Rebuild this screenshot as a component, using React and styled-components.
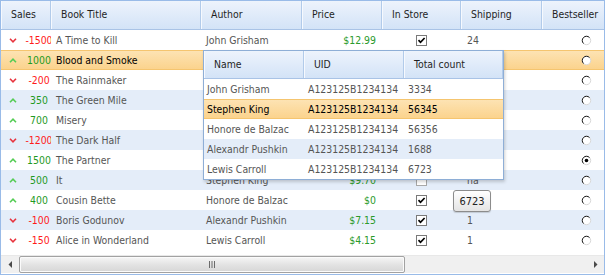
import React from "react";
import styled, { createGlobalStyle, css } from "styled-components";

const GlobalStyle = createGlobalStyle`
  body {
    margin: 0;
    background: #ffffff;
  }
`;

const COLS = "50px 150px 101px 80px 79px 81px 88px";

const Grid = styled.div`
  position: relative;
  width: 605px;
  height: 275px;
  box-sizing: border-box;
  border: 1px solid #99bbe8;
  background: #ffffff;
  overflow: hidden;
  display: flex;
  flex-direction: column;
  font-family: "DejaVu Sans Condensed", "DejaVu Sans", sans-serif;
  font-stretch: condensed;
  font-size: 10.4px;
  color: #555555;
`;

const HeaderRow = styled.div`
  display: grid;
  grid-template-columns: ${(p) => p.$cols};
  height: ${(p) => p.$h || 29}px;
  flex: none;
  box-sizing: border-box;
  border-bottom: 1px solid #a9c3e6;
  background: linear-gradient(#edf3fc, #d3e3f7);
`;

const HeaderCell = styled.div`
  padding-left: 10px;
  line-height: 27px;
  color: #1f1f1f;
  white-space: nowrap;
  overflow: hidden;
  border-right: 1px solid #b2cbea;
  box-shadow: inset 1px 0 0 #f6f9fe;
`;

const Body = styled.div`
  flex: none;
`;

const rowTone = {
  plain: css`
    background: #ffffff;
  `,
  alt: css`
    background: #e4edf9;
  `,
  selected: css`
    background: linear-gradient(#fde3b3, #fbd38d);
    border-top: 1px solid #f5c56f;
    border-bottom: 1px solid #f5c56f;
    color: #000000;
  `,
};

const Row = styled.div`
  display: grid;
  grid-template-columns: ${(p) => p.$cols};
  height: 20px;
  box-sizing: border-box;
  align-items: center;
  ${(p) => rowTone[p.$tone]}
`;

const Cell = styled.div`
  padding: 0 ${(p) => p.$pad || 5}px;
  text-align: ${(p) => p.$align || "left"};
  white-space: nowrap;
  overflow: hidden;
  display: ${(p) => (p.$center ? "flex" : "block")};
  justify-content: center;
  align-items: center;
`;

const SalesCell = styled.div`
  display: flex;
  align-items: center;
  overflow: hidden;
  padding-left: 8px;
  white-space: nowrap;
`;

const Icon = styled.span`
  flex: none;
  display: flex;
  width: 8px;
`;

const SalesValue = styled.span`
  flex: none;
  width: 40px;
  margin-left: 2px;
  text-align: center;
  color: ${(p) => (p.$up ? "#1f9a1f" : "#ff1a1a")};
`;

const Price = styled(Cell)`
  color: #2b9a2b;
  padding-right: 6px;
`;

const Spacer = styled.div`
  flex: 1;
`;

const ScrollBar = styled.div`
  flex: none;
  height: 17px;
  margin-bottom: 1px;
  display: flex;
  background: #f0f0f0;
  border-top: 1px solid #e8e8e8;
`;

const ScrollBtn = styled.div`
  width: 17px;
  display: flex;
  align-items: center;
  justify-content: center;
  flex: none;
`;

const Track = styled.div`
  flex: 1;
  display: flex;
  align-items: stretch;
  padding: 0 1px;
`;

const Thumb = styled.div`
  width: 386px;
  box-sizing: border-box;
  border: 1px solid #a2a2a2;
  border-radius: 2px;
  background: linear-gradient(#f6f6f6, #e2e2e2 55%, #d6d6d6);
  box-shadow: inset 0 0 0 1px #fbfbfb;
  display: flex;
  align-items: center;
  justify-content: center;
`;

const Popup = styled.div`
  position: absolute;
  left: 202px;
  top: 49px;
  width: 301px;
  box-sizing: border-box;
  border: 1px solid #8eaed6;
  background: #ffffff;
  box-shadow: 1px 2px 3px rgba(0, 0, 0, 0.18);
`;

const POP_COLS = "100px 100px 99px";

const Tooltip = styled.div`
  position: absolute;
  left: 452px;
  top: 189px;
  width: 38px;
  height: 22px;
  box-sizing: border-box;
  border: 1px solid #8c8c8c;
  border-radius: 3px;
  background: linear-gradient(#ffffff, #e4e4e4);
  color: #222222;
  font-size: 11px;
  display: flex;
  align-items: center;
  justify-content: center;
  box-shadow: 0 1px 1px rgba(0, 0, 0, 0.15);
`;

const Chevron = ({ up }) => (
  <svg width="8" height="5" viewBox="0 0 8 5">
    {up ? (
      <path d="M1 4.2 L4 1.2 L7 4.2" fill="none" stroke="#55cc55" strokeWidth="1.6" />
    ) : (
      <path d="M1 0.8 L4 3.8 L7 0.8" fill="none" stroke="#e8353f" strokeWidth="1.6" />
    )}
  </svg>
);

const CheckBox = ({ checked }) => (
  <svg width="11" height="11" viewBox="0 0 11 11">
    <rect x="0.5" y="0.5" width="10" height="10" fill="#ffffff" stroke={checked ? "#7a7a7a" : "#a8a8a8"} />
    {checked && (
      <path d="M2.5 5.2 L4.5 7.3 L8.6 3" fill="none" stroke="#000000" strokeWidth="1.7" />
    )}
  </svg>
);

const Radio = ({ checked }) => (
  <svg width="11" height="11" viewBox="0 0 11 11">
    <circle cx="5.5" cy="5.5" r="4.2" fill="#ffffff" stroke="#d8d8d8" />
    <path d="M2.5 8.5 A4.2 4.2 0 0 1 8.5 2.5" fill="none" stroke="#1a1a1a" strokeWidth="1" />
    {checked && <circle cx="5.5" cy="5.5" r="1.8" fill="#000000" />}
  </svg>
);

const Grip = () => (
  <svg width="8" height="7" viewBox="0 0 8 7">
    <path d="M1.5 0 V7 M4 0 V7 M6.5 0 V7" stroke="#6b6b6b" strokeWidth="1" />
  </svg>
);

const Arrow = ({ dir }) => (
  <svg width="4" height="7" viewBox="0 0 4 7">
    {dir === "left" ? <path d="M4 0 L0.5 3.5 L4 7 Z" fill="#4a4a4a" /> : <path d="M0 0 L3.5 3.5 L0 7 Z" fill="#4a4a4a" />}
  </svg>
);

// rows 2-7 sit under the author dropdown, so their author/price/shipping stay blank
const books = [
  { sales: -1500, title: "A Time to Kill", author: "John Grisham", price: "$12.99", inStore: true, ship: "24" },
  { sales: 1000, title: "Blood and Smoke", author: "", price: "", inStore: true, ship: "" },
  { sales: -200, title: "The Rainmaker", author: "", price: "", inStore: false, ship: "" },
  { sales: 350, title: "The Green Mile", author: "", price: "", inStore: true, ship: "" },
  { sales: 700, title: "Misery", author: "", price: "", inStore: true, ship: "" },
  { sales: -1200, title: "The Dark Half", author: "", price: "", inStore: false, ship: "" },
  { sales: 1500, title: "The Partner", author: "", price: "", inStore: true, ship: "", best: true },
  { sales: 500, title: "It", author: "Stephen King", price: "$9.70", inStore: false, ship: "na" },
  { sales: 400, title: "Cousin Bette", author: "Honore de Balzac", price: "$0", inStore: true, ship: "" },
  { sales: -100, title: "Boris Godunov", author: "Alexandr Pushkin", price: "$7.15", inStore: true, ship: "1" },
  { sales: -150, title: "Alice in Wonderland", author: "Lewis Carroll", price: "$4.15", inStore: true, ship: "1" },
];

const authors = [
  { name: "John Grisham", uid: "A123125B1234134", total: "3334" },
  { name: "Stephen King", uid: "A123125B1234134", total: "56345", selected: true },
  { name: "Honore de Balzac", uid: "A123125B1234134", total: "56356" },
  { name: "Alexandr Pushkin", uid: "A123125B1234134", total: "1688" },
  { name: "Lewis Carroll", uid: "A123125B1234134", total: "6723" },
];

const toneFor = (i, selected) => (selected ? "selected" : i % 2 ? "alt" : "plain");

export default function App() {
  return (
    <>
      <GlobalStyle />
      <Grid>
        <HeaderRow $cols={COLS}>
          {["Sales", "Book Title", "Author", "Price", "In Store", "Shipping", "Bestseller"].map((h) => (
            <HeaderCell key={h}>{h}</HeaderCell>
          ))}
        </HeaderRow>
        <Body>
          {books.map((b, i) => (
            <Row key={b.title} $cols={COLS} $tone={toneFor(i, i === 1)}>
              <SalesCell>
                <Icon>
                  <Chevron up={b.sales > 0} />
                </Icon>
                <SalesValue $up={b.sales > 0}>{b.sales}</SalesValue>
              </SalesCell>
              <Cell>{b.title}</Cell>
              <Cell>{b.author}</Cell>
              <Price $align="right">{b.price}</Price>
              <Cell $center>
                <CheckBox checked={b.inStore} />
              </Cell>
              <Cell $pad={6}>{b.ship}</Cell>
              <Cell $center>
                <Radio checked={b.best} />
              </Cell>
            </Row>
          ))}
        </Body>
        <Spacer />
        <ScrollBar>
          <ScrollBtn>
            <Arrow dir="left" />
          </ScrollBtn>
          <Track>
            <Thumb>
              <Grip />
            </Thumb>
          </Track>
          <ScrollBtn>
            <Arrow dir="right" />
          </ScrollBtn>
        </ScrollBar>

        <Popup>
          <HeaderRow $cols={POP_COLS} $h={28}>
            <HeaderCell>Name</HeaderCell>
            <HeaderCell>UID</HeaderCell>
            <HeaderCell>Total count</HeaderCell>
          </HeaderRow>
          {authors.map((a, i) => (
            <Row key={a.name} $cols={POP_COLS} $tone={toneFor(i, a.selected)}>
              <Cell $pad={3}>{a.name}</Cell>
              <Cell $pad={4}>{a.uid}</Cell>
              <Cell $pad={4}>{a.total}</Cell>
            </Row>
          ))}
        </Popup>

        <Tooltip>6723</Tooltip>
      </Grid>
    </>
  );
}
